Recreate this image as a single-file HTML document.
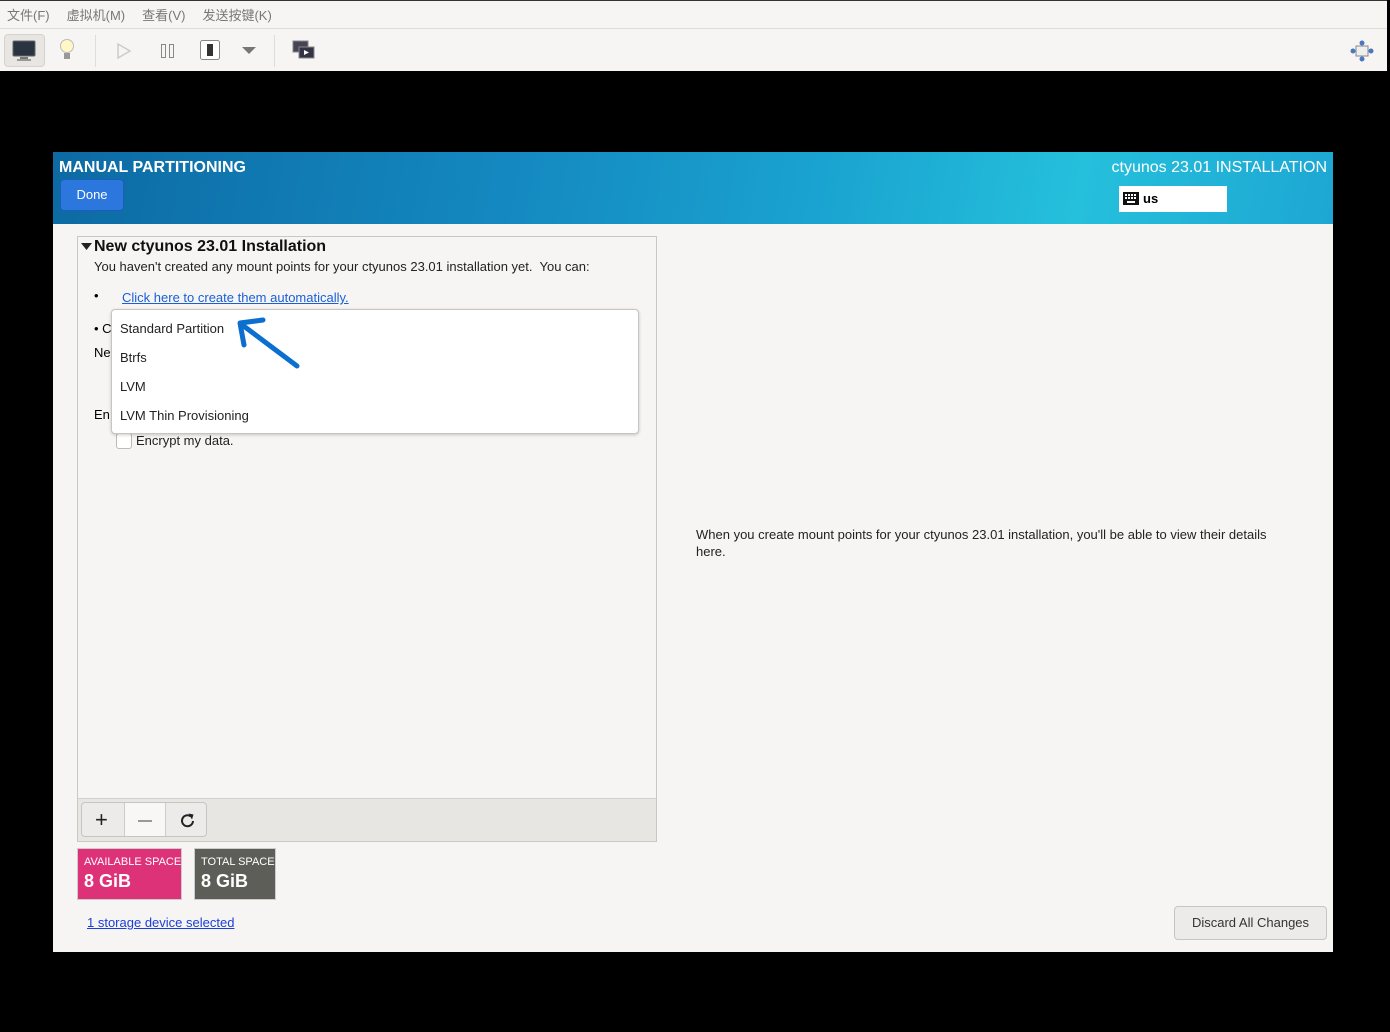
<!DOCTYPE html>
<html><head><meta charset="utf-8"><style>
*{margin:0;padding:0;box-sizing:border-box}
body{width:1390px;height:1032px;background:#000;position:relative;overflow:hidden;font-family:"Liberation Sans","Noto Sans CJK SC",sans-serif}
.win{position:absolute;left:0;top:0;width:1387px;height:71px;background:#f6f5f4;border-top:1px solid #333}
.menu{height:28px;border-bottom:1px solid #ddd;font-size:13px;color:#777;display:flex;align-items:center;padding-left:7px}
.menu span{margin-right:17px}
.tb{position:absolute;top:29px;left:0;right:0;height:42px}
.ab{position:absolute}
.hdr{position:absolute;left:53px;top:152px;width:1280px;height:72px;background:linear-gradient(100deg,#0d6aa3 0%,#1488c0 35%,#1aa3d0 60%,#25c0dc 80%,#1da6d3 100%)}
.main{position:absolute;left:53px;top:224px;width:1280px;height:728px;background:#f6f5f4;font-family:"Liberation Sans",sans-serif}
.t{position:absolute;white-space:nowrap}
</style></head><body>
<div class="win">
 <div class="menu"><span>文件(F)</span><span>虚拟机(M)</span><span>查看(V)</span><span>发送按键(K)</span></div>
 <div class="tb">
  <div class="ab" style="left:4px;top:4px;width:41px;height:33px;background:#e8e6e3;border:1px solid #d6d3cf;border-radius:4px"></div>
  <svg class="ab" style="left:12px;top:10px" width="26" height="22"><rect x="1" y="1" width="22" height="15" rx="1" fill="#2a3340" stroke="#666"/><rect x="8" y="17" width="8" height="2" fill="#777"/><rect x="5" y="19" width="14" height="2" fill="#999"/></svg>
  <svg class="ab" style="left:59px;top:8px" width="16" height="24"><circle cx="8" cy="8" r="6.5" fill="#fff7c8" stroke="#bbb"/><rect x="5" y="15" width="6" height="6" fill="#999"/></svg>
  <div class="ab" style="left:95px;top:5px;width:1px;height:32px;background:#ddd"></div>
  <svg class="ab" style="left:116px;top:13px" width="16" height="16"><path d="M2 1 L14 8 L2 15 Z" fill="none" stroke="#ccc" stroke-width="1.5"/></svg>
  <svg class="ab" style="left:160px;top:13px" width="16" height="16"><rect x="1.5" y="1.5" width="4" height="13" fill="none" stroke="#888"/><rect x="9.5" y="1.5" width="4" height="13" fill="none" stroke="#888"/></svg>
  <svg class="ab" style="left:199px;top:9px" width="22" height="22"><rect x="1.5" y="1.5" width="19" height="19" rx="2" fill="#fff" stroke="#888"/><rect x="8" y="5" width="6" height="12" fill="#333"/></svg>
  <svg class="ab" style="left:242px;top:17px" width="14" height="8"><path d="M0 0 L14 0 L7 7 Z" fill="#777"/></svg>
  <div class="ab" style="left:274px;top:5px;width:1px;height:32px;background:#ddd"></div>
  <svg class="ab" style="left:292px;top:10px" width="24" height="22"><rect x="1" y="1" width="15" height="11" fill="#445" stroke="#888"/><rect x="7" y="7" width="15" height="11" fill="#334" stroke="#888"/><path d="M12 10 L17 12.5 L12 15 Z" fill="#fff"/></svg>
  <svg class="ab" style="left:1350px;top:10px" width="24" height="22"><rect x="6" y="6" width="12" height="10" fill="#eee" stroke="#888"/><circle cx="12" cy="3" r="2.5" fill="#4a78c0"/><circle cx="12" cy="19" r="2.5" fill="#4a78c0"/><circle cx="3" cy="11" r="2.5" fill="#4a78c0"/><circle cx="21" cy="11" r="2.5" fill="#4a78c0"/></svg>
 </div>
</div>
<div class="hdr">
 <div class="t" style="left:6px;top:7px;color:#fff;font:bold 16px 'Liberation Sans',sans-serif">MANUAL PARTITIONING</div>
 <div class="t" style="left:7px;top:27px;width:64px;height:32px;background:#2b77dd;border:1px solid #1c5fb8;border-radius:4px;color:#fff;font:13px 'Liberation Sans',sans-serif;text-align:center;line-height:30px">Done</div>
 <div class="t" style="right:6px;top:7px;color:#fff;font:16px 'Liberation Sans',sans-serif">ctyunos 23.01 INSTALLATION</div>
 <div class="t" style="left:1066px;top:34px;width:108px;height:26px;background:#fff">
  <svg style="position:absolute;left:4px;top:6px" width="16" height="14"><rect width="16" height="13" fill="#111"/><g fill="#fff"><rect x="2" y="2" width="2" height="2"/><rect x="5" y="2" width="2" height="2"/><rect x="8" y="2" width="2" height="2"/><rect x="11" y="2" width="2" height="2"/><rect x="2" y="5" width="2" height="2"/><rect x="5" y="5" width="2" height="2"/><rect x="8" y="5" width="2" height="2"/><rect x="11" y="5" width="2" height="2"/><rect x="4" y="9" width="8" height="2"/></g></svg>
  <span style="position:absolute;left:24px;top:5px;font:bold 13px 'Liberation Sans',sans-serif">us</span>
 </div>
</div>
<div class="main">
 <div style="position:absolute;left:24px;top:12px;width:580px;height:606px;border:1px solid #cdc7c2;background:#f6f5f4">
  <svg style="position:absolute;left:3px;top:6px" width="12" height="8"><path d="M0 0 L11 0 L5.5 7 Z" fill="#222"/></svg>
  <div class="t" style="left:16px;top:1px;font-weight:bold;font-size:16px;color:#111">New ctyunos 23.01 Installation</div>
  <div class="t" style="left:16px;top:22px;font-size:13px;color:#222">You haven't created any mount points for your ctyunos 23.01 installation yet.&nbsp; You can:</div>
  <div class="t" style="left:16px;top:51px;font-size:13px">•</div>
  <div class="t" style="left:44px;top:53px;font-size:13px;color:#1a5fd6;text-decoration:underline">Click here to create them automatically.</div>
  <div class="t" style="left:16px;top:84px;font-size:13px">• C</div>
  <div class="t" style="left:16px;top:108px;font-size:13px">Ne</div>
  <div class="t" style="left:16px;top:170px;font-size:13px">En</div>
  <div class="t" style="left:38px;top:196px;width:16px;height:16px;border:1px solid #bbb;border-radius:3px;background:#fff"></div>
  <div class="t" style="left:58px;top:196px;font-size:13px;color:#222">Encrypt my data.</div>
  <div style="position:absolute;left:33px;top:72px;width:528px;height:125px;background:#fff;border:1px solid #c8c4c0;border-radius:4px;box-shadow:0 1px 3px rgba(0,0,0,.2);font-size:13px;color:#222">
   <div class="t" style="left:8px;top:11px">Standard Partition</div>
   <div class="t" style="left:8px;top:40px">Btrfs</div>
   <div class="t" style="left:8px;top:69px">LVM</div>
   <div class="t" style="left:8px;top:98px">LVM Thin Provisioning</div>
  </div>
  <svg style="position:absolute;left:155px;top:80px" width="70" height="55"><path d="M11 28 L7 6 L30 3 M8 7 L64 49" fill="none" stroke="#0b6fd0" stroke-width="5" stroke-linecap="round" stroke-linejoin="round"/></svg>
  <div style="position:absolute;left:0;bottom:0;width:578px;height:43px;background:#e8e6e3;border-top:1px solid #d5d0cc"></div>
  <div style="position:absolute;left:3px;top:565px;width:126px;height:35px;border:1px solid #c8c4c0;border-radius:4px;background:#edebe9;overflow:hidden">
   <div style="position:absolute;left:42px;top:0;width:42px;height:35px;background:#f8f7f6;border-left:1px solid #ccc;border-right:1px solid #ccc"></div>
   <div class="t" style="left:13px;top:4px;font-size:22px;color:#222">+</div>
   <div style="position:absolute;left:56px;top:17px;width:14px;height:1.5px;background:#999"></div>
   <svg style="position:absolute;left:97px;top:9px" width="18" height="18"><path d="M14 9 A5.5 5.5 0 1 1 12 4.5" fill="none" stroke="#222" stroke-width="2"/><path d="M9.5 1.5 L14.5 2.5 L13 7.5 Z" fill="#222"/></svg>
  </div>
 </div>
 <div style="position:absolute;left:24px;top:624px;width:105px;height:52px;background:#de3278;border:1px solid #ccc;color:#fff">
  <div class="t" style="left:6px;top:7px;font-size:11px">AVAILABLE SPACE</div>
  <div class="t" style="left:6px;top:22px;font-size:18px;font-weight:bold">8 GiB</div>
 </div>
 <div style="position:absolute;left:141px;top:624px;width:82px;height:52px;background:#5e5e58;border:1px solid #ccc;color:#fff">
  <div class="t" style="left:6px;top:7px;font-size:11px">TOTAL SPACE</div>
  <div class="t" style="left:6px;top:22px;font-size:18px;font-weight:bold">8 GiB</div>
 </div>
 <div class="t" style="left:34px;top:691px;font-size:13px;color:#1a3fd6;text-decoration:underline">1 storage device selected</div>
 <div class="t" style="left:643px;top:302px;font-size:13px;color:#222;line-height:17px;white-space:normal;width:600px">When you create mount points for your ctyunos 23.01 installation, you'll be able to view their details here.</div>
 <div class="t" style="left:1121px;top:682px;width:153px;height:34px;border:1px solid #c8c4c0;border-radius:4px;background:#edebe9;font-size:13px;color:#333;text-align:center;line-height:32px">Discard All Changes</div>
</div>
</body></html>
